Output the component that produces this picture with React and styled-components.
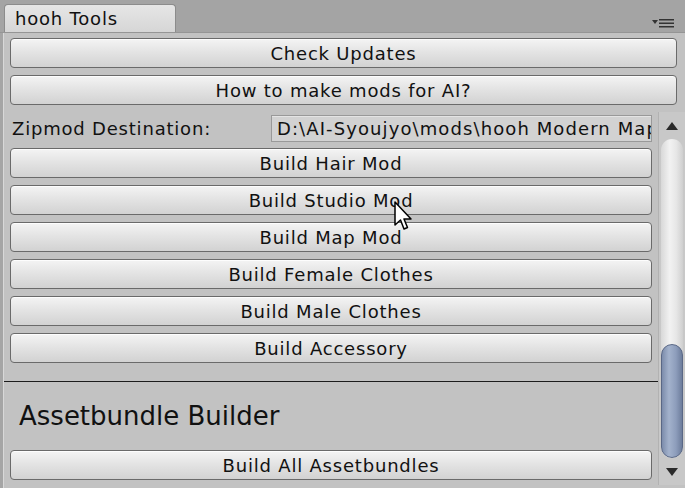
import styled, { createGlobalStyle } from "styled-components";

const GlobalStyle = createGlobalStyle`
  html, body {
    margin: 0;
    padding: 0;
    background: #a5a5a5;
  }
  body {
    font-family: "DejaVu Sans", Verdana, sans-serif;
    letter-spacing: 0.8px;
    color: #111;
  }
`;

const Window = styled.div`
  position: relative;
  width: 685px;
  height: 488px;
  display: flex;
  flex-direction: column;
  overflow: hidden;
  background: #a5a5a5;
`;

const TabBar = styled.div`
  height: 32px;
  flex-shrink: 0;
  display: flex;
  align-items: flex-end;
  justify-content: space-between;
  background: #a4a4a4;
  border-bottom: 1px solid #959595;
  padding-left: 4px;
  padding-right: 9px;
`;

const Tab = styled.div`
  width: 160px;
  height: 27px;
  padding-left: 10px;
  display: flex;
  align-items: center;
  font-size: 18px;
  background: linear-gradient(#e6e6e6, #d6d6d6);
  border: 1px solid #8c8c8c;
  border-bottom: none;
  border-radius: 4px 4px 0 0;
`;

const MenuIcon = styled.svg`
  margin-bottom: 4px;
`;

const Panel = styled.div`
  flex: 1;
  display: flex;
  flex-direction: column;
  margin-left: 3px;
  border-left: 1px solid #d8d8d8;
  background: #c2c2c2;
`;

const TopButtons = styled.div`
  display: flex;
  flex-direction: column;
  gap: 7px;
  padding: 5px 8px 0 6px;
`;

const Button = styled.button`
  height: 30px;
  width: 100%;
  margin: 0;
  padding: 0;
  font-family: inherit;
  font-size: 18px;
  letter-spacing: 0.8px;
  color: #111;
  background: linear-gradient(#f4f4f4, #e4e4e4 45%, #d2d2d2);
  border: 1px solid #6a6a6a;
  border-radius: 4px;
  box-shadow: inset 0 1px 0 #fdfdfd;
  cursor: pointer;
`;

const ScrollView = styled.div`
  flex: 1;
  display: flex;
  margin-top: 7px;
  margin-bottom: 3px;
`;

const ScrollContent = styled.div`
  flex: 1;
  display: flex;
  flex-direction: column;
`;

const FieldRow = styled.div`
  display: flex;
  align-items: center;
  justify-content: space-between;
  height: 27px;
  margin: 3px 6px 0 8px;
`;

const Label = styled.span`
  font-size: 18px;
`;

const TextField = styled.div`
  width: 374px;
  height: 25px;
  padding-left: 5px;
  display: flex;
  align-items: center;
  font-size: 18px;
  letter-spacing: 1.1px;
  white-space: nowrap;
  overflow: hidden;
  background: #d2d2d2;
  border: 1px solid #999;
  box-shadow: inset 0 1px 0 #e4e4e4;
`;

const ButtonList = styled.div`
  display: flex;
  flex-direction: column;
  gap: 7px;
  padding: 6px 6px 0 6px;
`;

const Separator = styled.hr`
  margin: 18px 0 0 0;
  border: none;
  height: 1px;
  background: #1c1c1c;
`;

const Heading = styled.h2`
  margin: 0;
  height: 67px;
  display: flex;
  align-items: center;
  padding-left: 15px;
  font-size: 26px;
  font-weight: normal;
  letter-spacing: 0;
`;

const BottomButton = styled.div`
  padding: 1px 6px 0 6px;
`;

const Scrollbar = styled.div`
  width: 26px;
  display: flex;
  flex-direction: column;
  align-items: center;
  background: #c8c8c8;
  border-left: 1px solid #b2b2b2;
`;

const Arrow = styled.div`
  height: 27px;
  display: flex;
  align-items: center;
  justify-content: center;
  flex-shrink: 0;
`;

const Track = styled.div`
  flex: 1;
  width: 22px;
  display: flex;
  flex-direction: column;
  border-radius: 11px;
  background: linear-gradient(90deg, #d8d8d8, #f2f2f2 40%, #e6e6e6 70%, #cfcfcf);
`;

const Thumb = styled.div`
  margin-top: auto;
  height: 114px;
  border-radius: 11px;
  border: 1px solid #5a6886;
  background: linear-gradient(90deg, #7c8cab, #a3b2cc 35%, #8d9dbb 70%, #6d7d9c);
  box-sizing: border-box;
`;

const Cursor = styled.svg`
  position: absolute;
  left: 394px;
  top: 201px;
  pointer-events: none;
`;

const modButtons = [
  "Build Hair Mod",
  "Build Studio Mod",
  "Build Map Mod",
  "Build Female Clothes",
  "Build Male Clothes",
  "Build Accessory",
];

const App = () => {
  return (
    <>
      <GlobalStyle />
      <Window>
        <TabBar>
          <Tab>hooh Tools</Tab>
          <MenuIcon width="24" height="10" viewBox="0 0 24 10">
            <path d="M0 2 L6 2 L3 6 Z" fill="#333" />
            <rect x="7" y="1" width="15" height="1.5" fill="#333" />
            <rect x="7" y="4.5" width="15" height="1.5" fill="#333" />
            <rect x="7" y="8" width="15" height="1.5" fill="#333" />
          </MenuIcon>
        </TabBar>
        <Panel>
          <TopButtons>
            <Button>Check Updates</Button>
            <Button>How to make mods for AI?</Button>
          </TopButtons>
          <ScrollView>
            <ScrollContent>
              <FieldRow>
                <Label>Zipmod Destination:</Label>
                <TextField>D:\AI-Syoujyo\mods\hooh Modern Map</TextField>
              </FieldRow>
              <ButtonList>
                {modButtons.map((name) => (
                  <Button key={name}>{name}</Button>
                ))}
              </ButtonList>
              <Separator />
              <Heading>Assetbundle Builder</Heading>
              <BottomButton>
                <Button>Build All Assetbundles</Button>
              </BottomButton>
            </ScrollContent>
            <Scrollbar>
              <Arrow>
                <svg width="12" height="8" viewBox="0 0 12 8">
                  <path d="M6 0 L12 8 L0 8 Z" fill="#2a2a2a" />
                </svg>
              </Arrow>
              <Track>
                <Thumb />
              </Track>
              <Arrow>
                <svg width="12" height="8" viewBox="0 0 12 8">
                  <path d="M0 0 L12 0 L6 8 Z" fill="#2a2a2a" />
                </svg>
              </Arrow>
            </Scrollbar>
          </ScrollView>
        </Panel>
        <Cursor width="20" height="32" viewBox="0 0 20 32">
          <path
            d="M1 1 L1 24 L6.5 19 L10 28 L13.5 26.5 L10 18 L17 18 Z"
            fill="#fff"
            stroke="#000"
            strokeWidth="1.5"
            strokeLinejoin="round"
          />
        </Cursor>
      </Window>
    </>
  );
};

export default App;
